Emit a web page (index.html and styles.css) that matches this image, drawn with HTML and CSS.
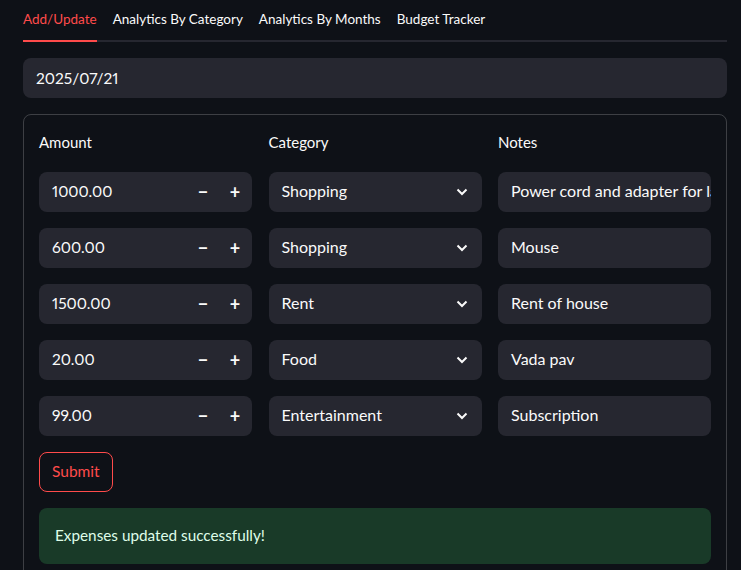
FILE: index.html
```html
<!DOCTYPE html>
<html>
<head>
<meta charset="utf-8">
<link rel="stylesheet" href="styles.css">
</head>
<body>
<div class="page">
  <div class="tabs">
    <div class="tab active">Add/Update</div>
    <div class="tab">Analytics By Category</div>
    <div class="tab">Analytics By Months</div>
    <div class="tab">Budget Tracker</div>
  </div>
  <div class="date-input">2025/07/21</div>
  <div class="form">
    <div class="grid">
      <div class="label">Amount</div>
      <div class="label">Category</div>
      <div class="label">Notes</div>

      <div class="num"><span class="val">1000.00</span><span class="btn">&minus;</span><span class="btn">+</span></div>
      <div class="select"><span class="val">Shopping</span><svg class="chev" width="12" height="8" viewBox="0 0 12 8"><path d="M1.5 1.5 L6 6 L10.5 1.5" fill="none" stroke="#fafafa" stroke-width="2"/></svg></div>
      <div class="text"><span class="val">Power cord and adapter for laptop</span></div>

      <div class="num"><span class="val">600.00</span><span class="btn">&minus;</span><span class="btn">+</span></div>
      <div class="select"><span class="val">Shopping</span><svg class="chev" width="12" height="8" viewBox="0 0 12 8"><path d="M1.5 1.5 L6 6 L10.5 1.5" fill="none" stroke="#fafafa" stroke-width="2"/></svg></div>
      <div class="text"><span class="val">Mouse</span></div>

      <div class="num"><span class="val">1500.00</span><span class="btn">&minus;</span><span class="btn">+</span></div>
      <div class="select"><span class="val">Rent</span><svg class="chev" width="12" height="8" viewBox="0 0 12 8"><path d="M1.5 1.5 L6 6 L10.5 1.5" fill="none" stroke="#fafafa" stroke-width="2"/></svg></div>
      <div class="text"><span class="val">Rent of house</span></div>

      <div class="num"><span class="val">20.00</span><span class="btn">&minus;</span><span class="btn">+</span></div>
      <div class="select"><span class="val">Food</span><svg class="chev" width="12" height="8" viewBox="0 0 12 8"><path d="M1.5 1.5 L6 6 L10.5 1.5" fill="none" stroke="#fafafa" stroke-width="2"/></svg></div>
      <div class="text"><span class="val">Vada pav</span></div>

      <div class="num"><span class="val">99.00</span><span class="btn">&minus;</span><span class="btn">+</span></div>
      <div class="select"><span class="val">Entertainment</span><svg class="chev" width="12" height="8" viewBox="0 0 12 8"><path d="M1.5 1.5 L6 6 L10.5 1.5" fill="none" stroke="#fafafa" stroke-width="2"/></svg></div>
      <div class="text"><span class="val">Subscription</span></div>
    </div>
    <button class="submit">Submit</button>
    <div class="success">Expenses updated successfully!</div>
  </div>
</div>
</body>
</html>
```
FILE: styles.css
```css
html, body {
  margin: 0;
  padding: 0;
  background: #0e1117;
  color: #fafafa;
  font-family: "Lato", "Noto Sans", sans-serif;
  font-variant-numeric: proportional-nums;
  overflow: hidden;
}
.page {
  padding: 0 14px 0 23px;
}
.tabs {
  display: flex;
  gap: 16px;
  border-bottom: 2px solid #262730;
  box-sizing: border-box;
  height: 42px;
}
.tab {
  font-size: 13.5px;
  line-height: 39px;
  height: 40px;
  box-sizing: border-box;
  margin-bottom: -2px;
  white-space: nowrap;
}
.tab.active {
  color: #ff4b4b;
  border-bottom: 2px solid #ff4b4b;
  height: 42px;
}
.date-input {
  margin-top: 16px;
  height: 40px;
  background: #262730;
  border-radius: 8px;
  font-size: 15.5px;
  line-height: 40px;
  padding: 0 13px;
}
.form {
  margin-top: 16px;
  border: 1px solid rgba(250, 250, 250, 0.2);
  border-radius: 8px;
  padding: 17px 15px 40px;
}
.grid {
  display: grid;
  grid-template-columns: 1fr 1fr 1fr;
  column-gap: 16.5px;
  row-gap: 16px;
}
.label {
  font-size: 15px;
  line-height: 20px;
  margin-bottom: 4px;
}
.num, .select, .text {
  height: 40px;
  background: #262730;
  border-radius: 8px;
  display: flex;
  align-items: center;
  font-size: 16px;
  overflow: hidden;
}
.val {
  flex: 1;
  padding-left: 13px;
  margin-bottom: 3px;
  white-space: nowrap;
  overflow: hidden;
}
.num .val {
  font-size: 15.5px;
}
.text .val {
  text-overflow: clip;
}
.btn {
  width: 32px;
  text-align: center;
  font-weight: 700;
  font-size: 18px;
  margin-bottom: 1px;
}
.num .btn:last-child {
  margin-right: 1px;
}
.chev {
  margin-right: 14px;
}
.submit {
  margin-top: 16px;
  height: 40px;
  padding: 0 12px 2px;
  background: transparent;
  border: 1px solid #ff4b4b;
  color: #ff4b4b;
  border-radius: 8px;
  font-family: inherit;
  font-size: 15.5px;
  display: block;
}
.success {
  margin-top: 16px;
  background: #193a28;
  color: #dffde9;
  border-radius: 8px;
  height: 56px;
  line-height: 54px;
  padding: 0 16px;
  font-size: 15.3px;
}
```
